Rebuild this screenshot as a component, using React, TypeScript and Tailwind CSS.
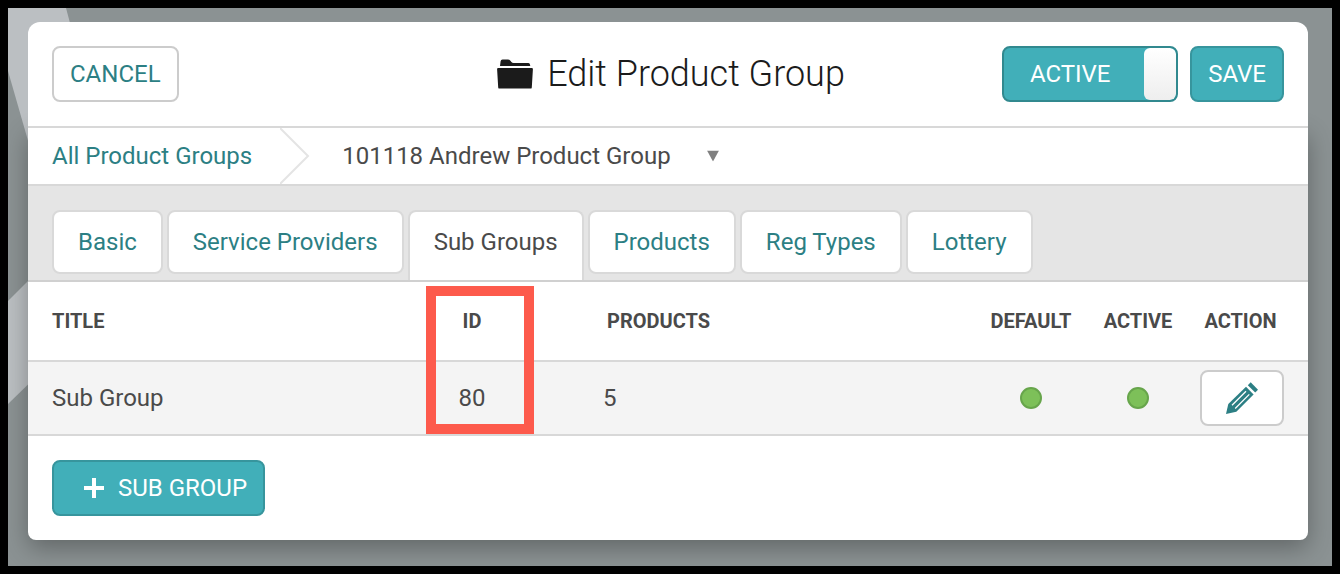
import { useState } from "react";

const tabs = [
  "Basic",
  "Service Providers",
  "Sub Groups",
  "Products",
  "Reg Types",
  "Lottery",
];

const subGroups = [
  { title: "Sub Group", id: 80, products: 5, isDefault: true, active: true },
];

const FolderIcon = () => (
  <svg className="h-[30px] w-9" viewBox="0 0 36 30" fill="currentColor" aria-hidden="true">
    <path d="M3 7L3.6 2.2Q3.8.5 5.5.5H11Q12.4.5 13.2 1.6L14.4 3Q15.2 4 16.6 4H31.2Q32.6 4 32.9 5.2L33.3 7Z" />
    <path d="M1.2 9H34.8Q36 9 35.9 10.2L34.8 28.4Q34.7 29.6 33.5 29.6H2.5Q1.3 29.6 1.2 28.4L.1 10.2Q0 9 1.2 9Z" />
  </svg>
);

const PencilIcon = () => (
  <svg className="size-8" viewBox="0 0 32 32" aria-hidden="true">
    <path fill="currentColor" d="M24.7.3L32 7.8L29.2 10.6L21.8 3.2Z" />
    <path fill="currentColor" d="M20 4.8L27.6 12.4L10.3 29.8L0 32L2.3 21.9Z" />
    <path stroke="#fff" strokeWidth="1.3" d="M20 9.3L6 23.3M23.3 12.4L9.2 26.5" />
  </svg>
);

const StatusDot = ({ label }: { label: string }) => (
  <span
    role="img"
    aria-label={label}
    className="mx-auto block size-[22px] rounded-full border-2 border-[#67a54b] bg-[#7dc059]"
  />
);

const Backdrop = () => (
  <svg
    className="absolute top-0 left-0 h-[440px] w-20"
    viewBox="0 0 80 440"
    fill="#bbbfc2"
    aria-hidden="true"
  >
    <path d="M0 0H58L98 150H25L0 63Z" />
    <path d="M0 293L40 253V357L0 396Z" />
  </svg>
);

const Header = () => {
  const [active, setActive] = useState(true);

  return (
    <header className="relative z-10 grid grid-cols-[1fr_auto_1fr] items-center rounded-t-xl border-b-2 border-[#d8d8d8] bg-white p-6">
      <button
        type="button"
        className="h-14 justify-self-start rounded-lg border-2 border-[#ccc] px-4 text-[#2c7f84]"
      >
        CANCEL
      </button>
      <h1 className="flex items-center gap-[14px] pl-[6px] text-4xl font-light text-[#1b1b1b]">
        <FolderIcon />
        Edit Product Group
      </h1>
      <div className="flex gap-3 justify-self-end text-white">
        <label className="flex h-14 w-44 cursor-pointer overflow-hidden rounded-lg border-2 border-[#31898f] bg-[#41afb9]">
          <input
            type="checkbox"
            role="switch"
            className="sr-only"
            checked={active}
            onChange={(e) => setActive(e.target.checked)}
          />
          <span className="flex flex-1 items-center justify-center pr-2">ACTIVE</span>
          <span className="w-8 rounded-md bg-linear-to-b from-white to-[#eee]" />
        </label>
        <button
          type="button"
          className="h-14 rounded-lg border-2 border-[#37959d] bg-[#41afb9] px-4"
        >
          SAVE
        </button>
      </div>
    </header>
  );
};

const Breadcrumb = () => (
  <nav aria-label="Breadcrumb" className="flex h-[58px] items-center border-b-2 border-[#d8d8d8] pl-6">
    <a href="#groups" className="text-[#2c7f84]">
      All Product Groups
    </a>
    <svg className="ml-7 h-14 w-[30px]" viewBox="0 0 30 56" fill="none" aria-hidden="true">
      <path d="M0 0L28 28L0 56" stroke="#e4e4e4" strokeWidth="2" />
    </svg>
    <div className="relative ml-8">
      <select aria-label="Product group" className="appearance-none bg-transparent pr-12">
        <option>101118 Andrew Product Group</option>
      </select>
      <svg
        className="pointer-events-none absolute top-1/2 right-0 h-[11px] w-3 -translate-y-1/2"
        viewBox="0 0 12 11"
        fill="#808080"
        aria-hidden="true"
      >
        <path d="M0 0H12L6 11Z" />
      </svg>
    </div>
  </nav>
);

const Tabs = () => {
  const [selected, setSelected] = useState("Sub Groups");

  return (
    <div
      role="tablist"
      className="flex h-24 items-start gap-1 border-b-2 border-[#d0d0d0] bg-[#e5e5e5] px-6 pt-6"
    >
      {tabs.map((tab) => (
        <button
          key={tab}
          type="button"
          role="tab"
          aria-selected={tab === selected}
          onClick={() => setSelected(tab)}
          className={
            tab === selected
              ? "h-[70px] rounded-t-lg border-2 border-b-0 border-[#d9d9d9] bg-white px-6 pb-2"
              : "h-16 rounded-lg border-2 border-[#d9d9d9] bg-white px-6 text-[#2c7f84]"
          }
        >
          {tab}
        </button>
      ))}
    </div>
  );
};

const SubGroupTable = () => (
  <table className="w-full table-fixed">
    <thead>
      <tr className="h-[79px] border-b-2 border-[#d8d8d8] text-xl">
        <th className="w-[398px] pl-6 text-left">TITLE</th>
        <th className="relative w-[92px]">
          ID
          {/* highlight around the id column */}
          <span className="pointer-events-none absolute top-1 left-0 h-[148px] w-[108px] border-10 border-[#fd5a4c]" />
        </th>
        <th className="pl-[89px] text-left">PRODUCTS</th>
        <th className="w-28">DEFAULT</th>
        <th className="w-[102px]">ACTIVE</th>
        <th className="w-[119px] pr-6 pl-2">ACTION</th>
      </tr>
    </thead>
    <tbody>
      {subGroups.map((group) => (
        <tr key={group.id} className="h-[74px] border-b-2 border-[#d8d8d8] bg-[#f4f4f4]">
          <td className="pl-6">{group.title}</td>
          <td className="text-center">{group.id}</td>
          <td className="pl-[85px]">{group.products}</td>
          <td>{group.isDefault && <StatusDot label="Default" />}</td>
          <td>{group.active && <StatusDot label="Active" />}</td>
          <td className="pr-6">
            <button
              type="button"
              aria-label="Edit sub group"
              className="ml-auto flex h-14 w-[84px] items-center justify-center rounded-lg border-2 border-[#ccc] bg-white text-[#2c7f84]"
            >
              <PencilIcon />
            </button>
          </td>
        </tr>
      ))}
    </tbody>
  </table>
);

const App = () => {
  return (
    <div className="relative min-h-screen overflow-hidden border-8 border-black bg-[#8b9293] pt-[14px] pr-6 pb-[26px] pl-5 font-[Roboto,sans-serif] text-2xl text-[#4a4a4a]">
      <Backdrop />
      <main className="relative">
        <Header />
        <section className="rounded-b-lg bg-white shadow-[0_8px_24px_rgba(0,0,0,0.3)]">
          <Breadcrumb />
          <Tabs />
          <SubGroupTable />
          <div className="p-6">
            <button
              type="button"
              className="flex h-14 items-center gap-[14px] rounded-lg border-2 border-[#37959d] bg-[#41afb9] pr-4 pl-[30px] text-white"
            >
              <svg className="size-5" viewBox="0 0 20 20" fill="none" aria-hidden="true">
                <path d="M10 0V20M0 10H20" stroke="currentColor" strokeWidth="4" />
              </svg>
              SUB GROUP
            </button>
          </div>
        </section>
      </main>
    </div>
  );
};

export default App;
